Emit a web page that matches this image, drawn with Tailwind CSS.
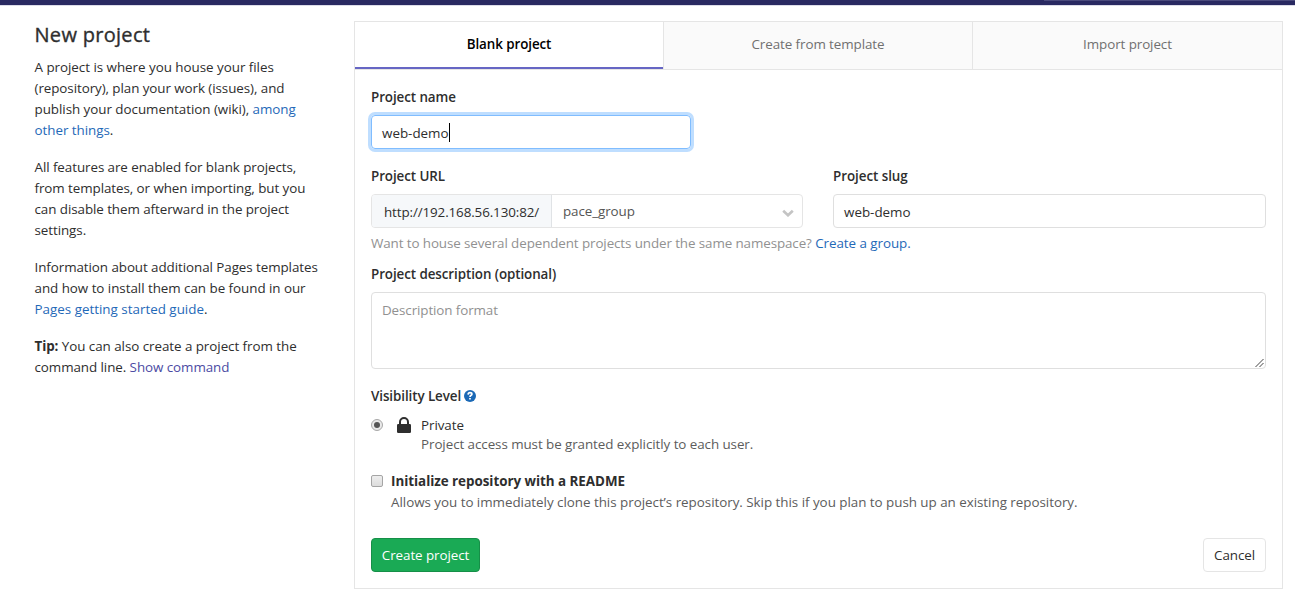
<!DOCTYPE html>
<html lang="en">
<head>
<meta charset="utf-8">
<title>New project</title>
<script src="https://cdn.jsdelivr.net/npm/@tailwindcss/browser@4"></script>
</head>
<body class="h-[595px] overflow-hidden bg-white font-['Segoe_UI','Open_Sans','Noto_Sans',sans-serif] text-[13.4px] leading-[21px] whitespace-nowrap text-[#2e2e2e]">
<header class="flex h-[6px] justify-end border-b border-[#dcdce8] bg-[#292961]"><div class="h-px w-[251px] bg-[#4a4a7c]"></div></header>
<main class="flex pt-[15px]">
  <aside class="w-[354px] shrink-0 pl-[34.500px] tracking-[-0.07px]">
    <h1 class="mt-px h-[35px] text-[20px] leading-[26px] font-medium tracking-[0.3px] [-webkit-text-stroke:0.35px_#2e2e2e]">New project</h1>
    <p class="mb-4"><span class="tracking-[-0.03px]">A project is where you house your files</span><br>(repository), plan your work (issues), and<br><span class="tracking-[-0.04px]">publish your documentation (wiki), <a class="text-[#1f69b8]">among<br>other things</a>.</span></p>
    <p class="mb-4">All features are enabled for blank projects,<br>from templates, or when importing, but you<br>can disable them afterward in the project<br>settings.</p>
    <p class="mb-4">Information about additional Pages templates<br><span class="tracking-[-0.04px]">and how to install them can be found in our</span><br><a class="tracking-normal text-[#1f69b8]">Pages getting started guide</a>.</p>
    <p><b>Tip:</b> <span class="tracking-[-0.05px]">You can also create a project from the</span><br>command line. <a class="text-[#4b4ba3]">Show command</a></p>
  </aside>
  <section class="h-[568px] w-[929px] border border-[#e5e5e5]">
    <nav class="flex h-[48px] text-center leading-[45px] tracking-[-0.08px] text-[#707070]">
      <div class="w-[308px] border-b border-[#e5e5e5] font-semibold text-black shadow-[inset_0_-2px_0_#6666c4]">Blank project</div>
      <div class="w-[309px] border-b border-l border-[#e5e5e5] bg-[#fafafa]">Create from template</div>
      <div class="w-[310px] border-b border-l border-[#e5e5e5] bg-[#fafafa]">Import project</div>
    </nav>
    <form class="px-4 pt-[17px]">
      <label class="block h-[28px] font-semibold tracking-[-0.08px]">Project name</label>
      <div class="flex h-[34px] w-[320px] items-center rounded border border-[#80bdff] px-[10px] pt-px shadow-[0_0_0_3px_#bfdeff]"><span class="pt-[2px]">web-demo</span><span class="h-[19px] w-px bg-black"></span></div>
      <div class="mt-[17px] flex gap-[30px]">
        <div class="w-[432px]">
          <label class="block h-[28px] font-semibold tracking-[-0.08px]">Project URL</label>
          <div class="flex h-[34px] rounded border border-[#e5e5e5]">
            <div class="w-[180px] rounded-l-[3px] border-r border-[#e0e3e6] bg-[#f6f8fa] pl-3 leading-[34px] tracking-[-0.11px]">http://192.168.56.130:82/</div>
            <div class="flex flex-1 items-center justify-between pr-2 pl-[11px] tracking-[-0.08px] text-[#555]">pace_group
              <svg class="mt-1" width="12" height="8" viewBox="0 0 12 8" fill="none" stroke="#c4c4c4" stroke-width="2.6"><path d="M1.2 1.700 6 6.300l4.800-4.600"/></svg>
            </div>
          </div>
        </div>
        <div class="w-[433px]">
          <label class="block h-[28px] font-semibold tracking-[-0.05px]">Project slug</label>
          <div class="h-[34px] rounded border border-[#dfdfdf] pl-[10px] leading-[34px]">web-demo</div>
        </div>
      </div>
      <p class="mt-[5px] tracking-[-0.1px] text-[#919191]">Want to house several dependent projects under the same namespace? <a class="tracking-[-0.05px] text-[#1f69b8]">Create a group.</a></p>
      <label class="mt-[10px] block h-[28px] font-semibold tracking-[-0.08px]">Project description (optional)</label>
      <div class="flex h-[77px] items-end justify-between rounded border border-[#dfdfdf] pl-[10px]">
        <span class="self-start pt-[7px] tracking-[-0.1px] text-[#919191]">Description format</span>
        <svg width="10" height="10" viewBox="0 0 10 10" stroke="#444" stroke-width="1"><path d="M.5 9l8-8M4.500 9l4-4"/></svg>
      </div>
      <div class="mt-[17px] flex h-[21px] items-center font-semibold tracking-[-0.08px]"><span>Visibility Level</span>
        <svg class="mb-px ml-[3px]" width="12" height="12" viewBox="0 0 12 12"><circle cx="6" cy="6" r="6" fill="#1b69b6"/><path d="M4.100 4.600C4.200 3.200 5 2.700 6 2.700c1.100 0 1.900.6 1.900 1.500C7.900 5.300 6 5.300 6 6.900M6 7.900v1.600" fill="none" stroke="#fff" stroke-width="1.700"/></svg>
      </div>
      <div class="mt-2 flex h-[42px]">
        <div class="mt-1 flex size-3 items-center justify-center rounded-full border border-[#a8a8a8] bg-[#e9e9e9]"><i class="size-[6px] rounded-full bg-[#555]"></i></div>
        <svg class="mt-[2px] ml-[14px]" width="14" height="16" viewBox="0 0 14 16"><rect y="7" width="14" height="9" rx="1.200" fill="#2e2e2e"/><path d="M3 8V5a4 4 0 0 1 8 0v3" fill="none" stroke="#2e2e2e" stroke-width="2"/></svg>
        <div class="ml-[10px] tracking-[-0.07px]"><div class="h-[19px]">Private</div><div class="text-[#5c5c5c]">Project access must be granted explicitly to each user.</div></div>
      </div>
      <div class="mt-[14px] flex">
        <div class="mt-1 size-3 rounded-[2px] border border-[#a5a5a5] bg-linear-to-b from-[#eee] to-[#ddd]"></div>
        <div class="ml-2 tracking-[-0.03px]"><div class="font-bold">Initialize repository with a README</div><div class="text-[#5c5c5c]">Allows you to immediately clone this project’s repository. Skip this if you plan to push up an existing repository.</div></div>
      </div>
      <div class="mt-[25px] flex h-[34px] justify-between text-center leading-[32px] tracking-[-0.08px]">
        <div class="w-[109px] rounded border border-[#168f48] bg-[#1aaa55] text-white">Create project</div>
        <div class="w-[63px] rounded border border-[#e5e5e5]">Cancel</div>
      </div>
    </form>
  </section>
</main>
</body>
</html>
